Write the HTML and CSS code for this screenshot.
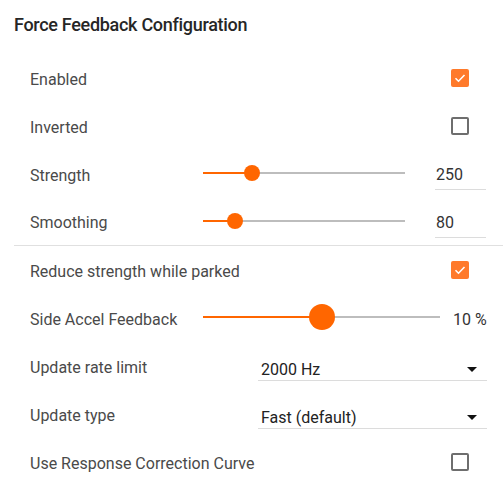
FILE: index.html
```html
<!DOCTYPE html>
<html lang="en">
<head>
    <meta charset="UTF-8">
    <meta name="viewport" content="width=device-width, initial-scale=1.0">
    <title>Force Feedback Configuration</title>
    <link rel="stylesheet" href="styles.css">
</head>
<body>

<div class="panel">
    <h2 class="panel-title">Force Feedback Configuration</h2>

    <!-- Basic settings -->
    <div class="group">
        <div class="row">
            <span class="label">Enabled</span>
            <span class="checkbox checked"><svg viewBox="0 0 18 18"><path d="M4.5 9.2l3 3 6-6.2"/></svg></span>
        </div>
        <div class="row">
            <span class="label">Inverted</span>
            <span class="checkbox"></span>
        </div>
        <div class="row">
            <span class="label slider-label">Strength</span>
            <div class="slider">
                <div class="track"></div>
                <div class="fill" style="width: 24.4%"></div>
                <div class="thumb" style="left: 24.4%"></div>
            </div>
            <div class="value-input">250</div>
        </div>
        <div class="row">
            <span class="label slider-label">Smoothing</span>
            <div class="slider">
                <div class="track"></div>
                <div class="fill" style="width: 16%"></div>
                <div class="thumb" style="left: 16%"></div>
            </div>
            <div class="value-input">80</div>
        </div>
    </div>

    <div class="divider"></div>

    <!-- Advanced settings -->
    <div class="group">
        <div class="row">
            <span class="label">Reduce strength while parked</span>
            <span class="checkbox checked"><svg viewBox="0 0 18 18"><path d="M4.5 9.2l3 3 6-6.2"/></svg></span>
        </div>
        <div class="row">
            <span class="label slider-label">Side Accel Feedback</span>
            <div class="slider wide">
                <div class="track"></div>
                <div class="fill" style="width: 50%"></div>
                <div class="thumb big" style="left: 50%"></div>
            </div>
            <div class="value-text">10 %</div>
        </div>
        <div class="row">
            <span class="label select-label">Update rate limit</span>
            <div class="select">
                <span>2000 Hz</span>
                <svg class="arrow" viewBox="0 0 10 5"><path d="M0 0h10L5 5z"/></svg>
            </div>
        </div>
        <div class="row">
            <span class="label select-label">Update type</span>
            <div class="select">
                <span>Fast (default)</span>
                <svg class="arrow" viewBox="0 0 10 5"><path d="M0 0h10L5 5z"/></svg>
            </div>
        </div>
        <div class="row">
            <span class="label">Use Response Correction Curve</span>
            <span class="checkbox"></span>
        </div>
    </div>
</div>

</body>
</html>
```

FILE: styles.css
```css
/* Page */
body {
    margin: 0;
    background: #fff;
    font-family: Roboto, "Liberation Sans", sans-serif;
    color: #4a4a4a;
}

.panel {
    padding-left: 14px;
}

.panel-title {
    margin: 0;
    padding-top: 14px;
    height: 54px;
    box-sizing: border-box;
    font-size: 18px;
    font-weight: 500;
    letter-spacing: -0.3px;
    color: #262626;
}

/* Rows */
.row {
    display: flex;
    align-items: center;
    height: 48px;
    padding: 0 16px;
    font-size: 16px;
}
.group:first-of-type .row:last-child {
    height: 47px;
}

.label {
    flex: 1;
    padding-top: 2px;
}
.slider-label {
    flex: 0 0 173px;
}
.select-label {
    flex: 0 0 228px;
}

.divider {
    height: 1px;
    background: #e0e0e0;
}

/* Checkbox */
.checkbox {
    width: 18px;
    height: 18px;
    box-sizing: border-box;
    border: 2px solid #6e6e6e;
    border-radius: 2px;
    margin-right: 18px;
}
.checkbox.checked {
    border: none;
    background: #ff7a2b;
}
.checkbox svg {
    display: block;
    width: 18px;
    height: 18px;
    fill: none;
    stroke: #fff;
    stroke-width: 1.6;
}

/* Slider */
.slider {
    position: relative;
    width: 202px;
    height: 26px;
}
.slider.wide {
    width: 237px;
}
.track, .fill {
    position: absolute;
    left: 0;
    top: 11px;
    height: 2px;
}
.track {
    width: 100%;
    background: #bdbdbd;
}
.fill {
    background: #ff6600;
}
.thumb {
    position: absolute;
    top: 4px;
    width: 16px;
    height: 16px;
    margin-left: -8px;
    border-radius: 50%;
    background: #ff6600;
}
.thumb.big {
    top: -1px;
    width: 26px;
    height: 26px;
    margin-left: -13px;
}

.value-input {
    margin-left: 30px;
    margin-top: 4px;
    width: 50px;
    padding: 3px 0 5px 1px;
    border-bottom: 1px solid #dcdcdc;
    color: #333;
}
.value-text {
    margin-left: 13px;
    padding-top: 2px;
    color: #333;
}

/* Select */
.select {
    flex: 1;
    display: flex;
    align-items: center;
    justify-content: space-between;
    padding: 9px 10px 1px 3px;
    border-bottom: 1px solid #dcdcdc;
    color: #222;
}
.arrow {
    width: 10px;
    height: 5px;
    fill: #111;
}
```
